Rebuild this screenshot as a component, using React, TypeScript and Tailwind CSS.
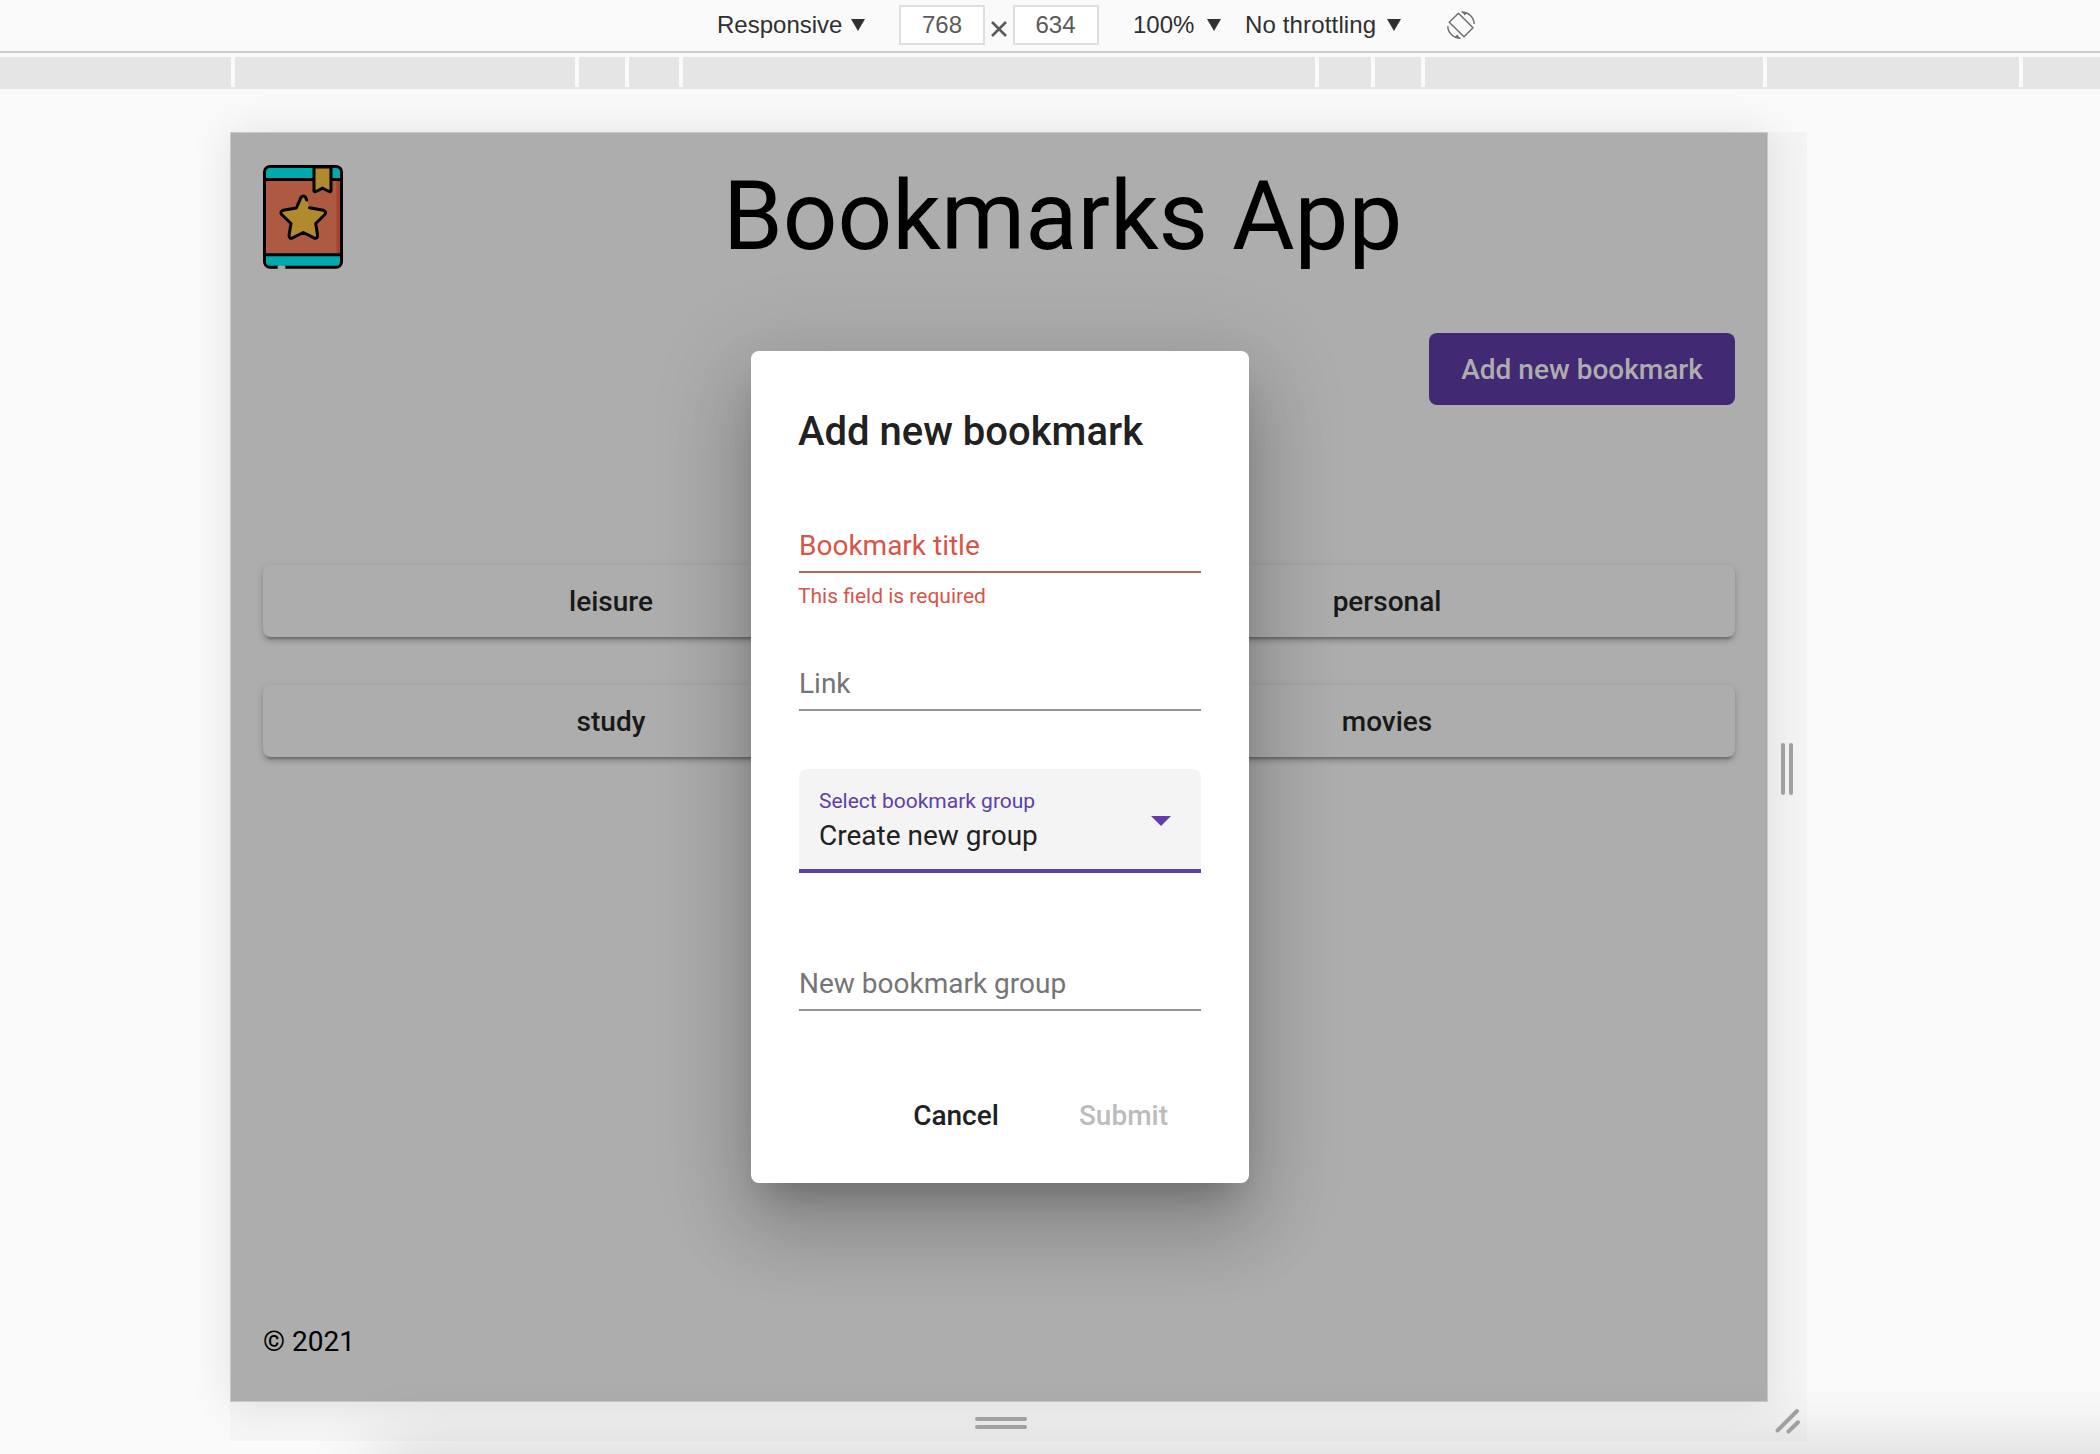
import type { ReactNode } from 'react';

const TICKS = ['ml-[231px]', 'ml-[340px]', 'ml-[46px]', 'ml-[50px]', 'ml-[632px]', 'ml-[52px]', 'ml-[46px]', 'ml-[338px]', 'ml-[252px]'];

function Caret({ className }: { className: string }) {
  return (
    <svg className={className} width="14" height="12" viewBox="0 0 14 12" fill="#303030">
      <path d="M0 0H14L7 12Z" />
    </svg>
  );
}

function RotateIcon() {
  return (
    <svg className="ml-[46px]" width="28" height="28" viewBox="0 0 28 28" fill="none" stroke="#6e6e6e" strokeWidth="1.5">
      <path d="M11.5 2.2 26 16.8 17 25.8 2.2 11.2Z" strokeLinejoin="round" />
      <path d="M14.5 1C21.5 1 27 6.5 27.2 13" />
      <path d="M13.5 27.2C6.5 27.2 1 22 .8 15.2" />
      <path d="M15 .6 20.5 1.8 17.5 4.4Z M13 27.5 7.5 26 10.5 23.6Z" fill="#6e6e6e" stroke="none" />
    </svg>
  );
}

function DeviceToolbar() {
  return (
    <div className="flex h-[53px] shrink-0 items-center border-b-2 border-[#cbcbcb] pb-px pl-[717px] font-['Liberation_Sans',Arial,sans-serif] text-[24px] leading-[30px] text-[#303030]">
      <span className="w-[125px] whitespace-nowrap">Responsive</span>
      <Caret className="ml-[9px]" />
      <div className="ml-[34px] flex h-10 w-[86px] items-center justify-center border-2 border-[#dedede] bg-white text-[#5a5a5a]">768</div>
      <svg className="mt-[7px] ml-[6px]" width="16" height="16" viewBox="0 0 16 16" stroke="#5a5a5a" strokeWidth="2.6">
        <path d="M1 1 15 15M15 1 1 15" />
      </svg>
      <div className="ml-[6px] flex h-10 w-[86px] items-center justify-center border-2 border-[#dedede] bg-white pr-px text-[#5a5a5a]">634</div>
      <span className="ml-[34px] w-[62px] whitespace-nowrap">100%</span>
      <Caret className="ml-[12px]" />
      <span className="ml-[24px] w-[132px] whitespace-nowrap tracking-[0.15px]">No throttling</span>
      <Caret className="ml-[10px]" />
      <RotateIcon />
    </div>
  );
}

function Ruler() {
  return (
    <div className="mt-1 flex h-8 shrink-0 bg-[#e5e5e5]">
      {TICKS.map((gap, i) => (
        <div key={i} className={`h-[30px] w-1 shrink-0 bg-[#fafafa] ${gap}`} />
      ))}
    </div>
  );
}

function BookLogo() {
  return (
    <svg width="80" height="104" viewBox="0 0 80 104">
      <rect x="1.5" y="1.5" width="77" height="101" rx="5.5" fill="#00a9ae" />
      <rect x="1.5" y="14.5" width="77" height="75.5" fill="#ae5a43" />
      <rect x="73.5" y="16" width="5" height="73" fill="#a34327" />
      <path d="M1.5 14.5H78.5M1.5 89.8H78.5" stroke="#000" strokeWidth="3" />
      <rect x="1.5" y="1.5" width="77" height="100.8" rx="5.5" fill="none" stroke="#000" strokeWidth="3" />
      <path d="M51 2V25.5Q51 27.5 53 26.5L59.5 23.2 66 26.5Q68 27.5 68 25.5V2Z" fill="#b18a2d" stroke="#000" strokeWidth="3" />
      <path d="M43.8 35 42.5 32.3Q40.3 29.5 38 32.3L33.3 43 20 45.3Q16.5 46.8 18.7 49.5L28 58.5 26 70.5Q26.3 74.2 29.5 72.8L40.3 67.5 51 72.8Q54.3 74.2 54.6 70.5L52.7 58.5 61.8 49.5Q64 46.8 60.5 45.3L46.5 42.8Z" fill="#b18a2d" />
      <path d="M43.8 35 42.5 32.3Q40.3 29.5 38 32.3L33.3 43 20 45.3Q16.5 46.8 18.7 49.5L28 58.5 26 70.5Q26.3 74.2 29.5 72.8L40.3 67.5 51 72.8Q54.3 74.2 54.6 70.5L52.7 58.5 61.8 49.5Q64 46.8 60.5 45.3L46.5 42.8" fill="none" stroke="#000" strokeWidth="3" strokeLinecap="round" strokeLinejoin="round" />
      <rect x="14.5" y="100.5" width="8" height="3.5" rx="1.5" fill="#8fb0b0" />
    </svg>
  );
}

function GroupCard({ children }: { children: ReactNode }) {
  return (
    <div className="flex h-[72px] items-center justify-center rounded-lg bg-[#adadad] pt-[2px] text-[28px] leading-10 font-medium text-[#191919] shadow-[0_6px_2px_-4px_rgba(0,0,0,0.2),0_4px_4px_0_rgba(0,0,0,0.14),0_2px_10px_0_rgba(0,0,0,0.12)]">
      {children}
    </div>
  );
}

function Dialog() {
  return (
    <div className="absolute top-[218px] left-[520px] h-[832px] w-[498px] rounded-lg bg-white px-12 pt-[49px] text-[28px] leading-10 text-[#212121] shadow-[0_22px_30px_-14px_rgba(0,0,0,0.2),0_48px_76px_6px_rgba(0,0,0,0.14),0_18px_92px_16px_rgba(0,0,0,0.12)]">
      <h2 className="-ml-px text-[40px] leading-[64px] font-medium">Add new bookmark</h2>
      <div className="mt-[62px] border-b-2 border-[#b9625a] pb-[5px] text-[#d75548]">Bookmark title</div>
      <div className="mt-[11px] -ml-px text-[21px] leading-6 text-[#d75548]">This field is required</div>
      <div className="mt-[56px] border-b-2 border-[#949494] pb-[5px] text-[#757575]">Link</div>
      <div className="mt-[58px] flex h-[104px] items-start justify-between rounded-t-lg border-b-4 border-[#5d42a2] bg-[#f4f4f4] pt-5 pr-[30px] pl-5">
        <div>
          <div className="text-[21px] leading-6 text-[#613ea9]">Select bookmark group</div>
          <div className="mt-[3px] text-[#212121]">Create new group</div>
        </div>
        <svg className="mt-[27px]" width="20" height="10" viewBox="0 0 20 10" fill="#613cb0">
          <path d="M0 0H20L10 10Z" />
        </svg>
      </div>
      <div className="mt-[91px] border-b-2 border-[#949494] pb-[5px] text-[#757575]">New bookmark group</div>
      <div className="mt-[69px] mr-px flex h-[72px] items-center justify-end gap-4 font-medium">
        <button className="px-8">Cancel</button>
        <button className="px-8 text-[#bcbcbc]">Submit</button>
      </div>
    </div>
  );
}

function Screen() {
  return (
    <div className="relative flex h-[1270px] w-[1538px] flex-col border border-[#c8c9cb] bg-[#adadad] px-8 font-[Roboto,sans-serif] shadow-[0_0_40px_rgba(0,0,0,0.1)]">
      <header className="flex h-[136px] items-start pt-8">
        <BookLogo />
        <h1 className="-mt-px ml-[380px] text-[96px] leading-[104px] whitespace-nowrap text-black">Bookmarks App</h1>
      </header>
      <div className="mt-16 flex justify-end">
        <button className="h-[72px] w-[306px] rounded-lg bg-[#422973] pt-[2px] text-[28px] leading-10 font-medium text-[#adadad]">Add new bookmark</button>
      </div>
      <main className="mt-40 grid grid-cols-2 gap-x-20 gap-y-12">
        <GroupCard>leisure</GroupCard>
        <GroupCard>personal</GroupCard>
        <GroupCard>study</GroupCard>
        <GroupCard>movies</GroupCard>
      </main>
      <footer className="mt-auto mb-[39px] text-[28px] leading-10 text-black">© 2021</footer>
      <Dialog />
    </div>
  );
}

export default function App() {
  return (
    <div className="relative flex h-[1454px] w-[2100px] flex-col overflow-hidden bg-[#fafafa]">
      <DeviceToolbar />
      <Ruler />
      <div className="mt-[43px] ml-[230px] grid w-[1577px] grid-cols-[1538px_39px] grid-rows-[1270px_39px]">
        <Screen />
        <div className="z-10 flex items-center justify-center gap-1 bg-black/[0.025] pt-1 pr-[2px]">
          <div className="h-[52px] w-1 rounded-sm bg-[#a0a0a0]" />
          <div className="h-[52px] w-1 rounded-sm bg-[#a0a0a0]" />
        </div>
        <div className="z-10 flex flex-col items-center justify-center gap-1 bg-black/[0.02] pt-[2px] pl-1">
          <div className="h-1 w-[52px] rounded-sm bg-[#a0a0a0]" />
          <div className="h-1 w-[52px] rounded-sm bg-[#a0a0a0]" />
        </div>
        <div className="z-10 bg-black/[0.02]">
          <svg width="39" height="39" viewBox="0 0 39 39" stroke="#a0a0a0" strokeWidth="4" strokeLinecap="round">
            <path d="M9.5 28.5 29 9M20.5 29.5 30 20.3" />
          </svg>
        </div>
      </div>
      <div className="absolute top-[1454px] left-[380px] h-40 w-[1900px] shadow-[0_0_76px_rgba(0,0,0,0.18)]" />
    </div>
  );
}
